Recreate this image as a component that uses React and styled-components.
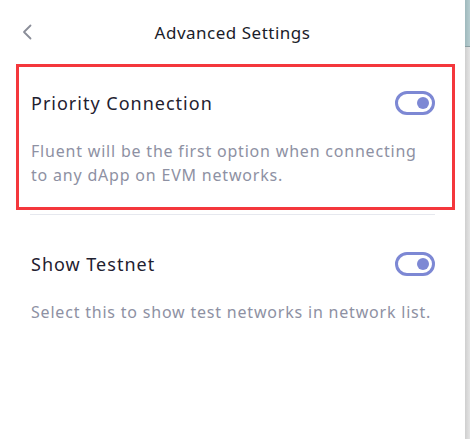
import React, { useState } from "react";
import styled, { createGlobalStyle } from "styled-components";

const GlobalStyle = createGlobalStyle`
  html, body {
    margin: 0;
    padding: 0;
    background: #ffffff;
  }
  body {
    font-family: "Noto Sans", "Open Sans", sans-serif;
  }
`;

const Frame = styled.div`
  display: flex;
  width: 470px;
  height: 439px;
  overflow: hidden;
`;

const Page = styled.div`
  flex: 1;
  display: flex;
  flex-direction: column;
`;

const Header = styled.div`
  display: grid;
  grid-template-columns: 40px 1fr 40px;
  align-items: center;
  height: 64px;
  padding: 0 0 0 21px;
`;

const BackButton = styled.button`
  display: flex;
  align-items: center;
  justify-content: flex-start;
  width: 24px;
  height: 24px;
  padding: 0;
  border: none;
  background: none;
  color: #8a8d98;
  cursor: pointer;
`;

const Title = styled.h1`
  margin: 0;
  text-align: center;
  font-size: 17px;
  font-weight: 400;
  letter-spacing: 0.5px;
  color: #1b1d2a;
  padding-right: 21px;
`;

const Highlight = styled.div`
  margin: 0 10px 0 16px;
  border: 3px solid #f4373c;
  padding: 0 17px 0 12px;
`;

const Plain = styled.div`
  padding: 0 30px 0 31px;
`;

const Item = styled.div`
  display: flex;
  flex-direction: column;
  gap: 24px;
  padding: ${(p) => p.$pad};
`;

const Row = styled.div`
  display: flex;
  align-items: center;
  justify-content: space-between;
  height: 24px;
`;

const Label = styled.span`
  font-size: 18px;
  letter-spacing: 1px;
  color: #1f2130;
`;

const Description = styled.p`
  margin: 0;
  font-size: 16px;
  line-height: 24px;
  letter-spacing: 0.8px;
  color: #8e91a3;
`;

const Divider = styled.hr`
  margin: 4px 30px 0 30px;
  border: none;
  border-top: 1px solid #e6e8ee;
`;

const SwitchTrack = styled.button`
  width: 40px;
  height: 24px;
  padding: 0;
  border: 3px solid #7d88d4;
  border-radius: 12px;
  background: #ffffff;
  cursor: pointer;
  display: flex;
  align-items: center;
  justify-content: ${(p) => (p.$on ? "flex-end" : "flex-start")};
`;

const SwitchKnob = styled.span`
  width: 12px;
  height: 12px;
  margin: 0 3px;
  border-radius: 50%;
  background: ${(p) => (p.$on ? "#7d88d4" : "#c4c7d4")};
`;

const Scrollbar = styled.div`
  width: 5px;
  display: flex;
  flex-direction: column;
  background: linear-gradient(90deg, #cfcfcf, #e4e4e4);
`;

const ScrollThumb = styled.div`
  height: 46px;
  background: linear-gradient(90deg, #9fb9bd, #b7cdd0);
  border-bottom: 1px solid #8a9ea1;
`;

function Toggle({ on, onClick }) {
  return (
    <SwitchTrack $on={on} onClick={onClick}>
      <SwitchKnob $on={on} />
    </SwitchTrack>
  );
}

export default function App() {
  const [priority, setPriority] = useState(true);
  const [testnet, setTestnet] = useState(true);

  return (
    <>
      <GlobalStyle />
      <Frame>
        <Page>
          <Header>
            <BackButton>
              <svg width="12" height="16" viewBox="0 0 12 16" fill="none">
                <path
                  d="M9.5 1.5 L3 8 L9.5 14.5"
                  stroke="currentColor"
                  strokeWidth="1.8"
                  strokeLinecap="round"
                  strokeLinejoin="round"
                />
              </svg>
            </BackButton>
            <Title>Advanced Settings</Title>
            <span />
          </Header>

          <Highlight>
            <Item $pad="24px 0 20px">
              <Row>
                <Label>Priority Connection</Label>
                <Toggle on={priority} onClick={() => setPriority(!priority)} />
              </Row>
              <Description>
                Fluent will be the first option when connecting to any dApp on
                EVM networks.
              </Description>
            </Item>
          </Highlight>
          <Divider />

          <Plain>
            <Item $pad="37px 0 0">
              <Row>
                <Label>Show Testnet</Label>
                <Toggle on={testnet} onClick={() => setTestnet(!testnet)} />
              </Row>
              <Description>
                Select this to show test networks in network list.
              </Description>
            </Item>
          </Plain>
        </Page>
        <Scrollbar>
          <ScrollThumb />
        </Scrollbar>
      </Frame>
    </>
  );
}
